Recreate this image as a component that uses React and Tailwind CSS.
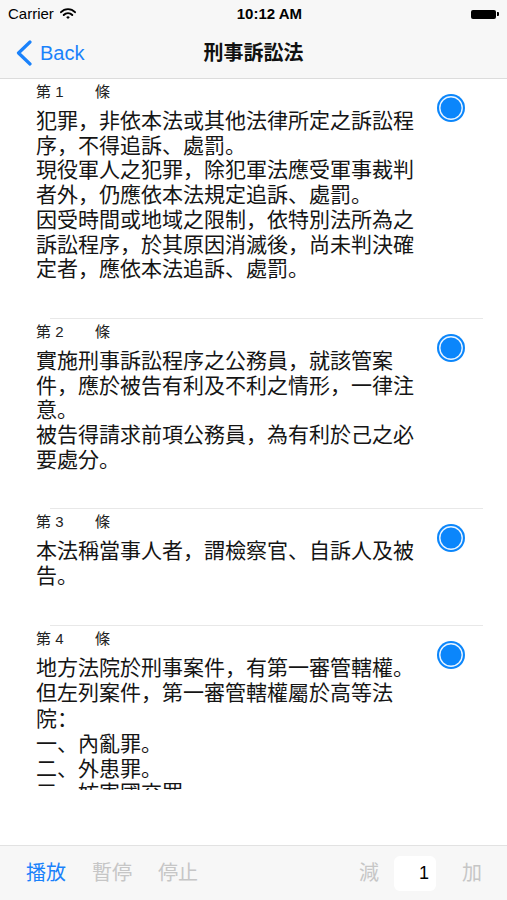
import React from "react";

const FONT = { fontFamily: '"Liberation Sans", "Noto Sans CJK JP", sans-serif' };
const SC = { fontFamily: '"Noto Sans CJK SC", sans-serif' };

const rows = [
  {
    n: "1",
    text:
      "犯罪，非依本法或其他法律所定之訴訟程序，不得追訴、處罰。\n現役軍人之犯罪，除犯軍法應受軍事裁判者外，仍應依本法規定追訴、處罰。\n因受時間或地域之限制，依特別法所為之訴訟程序，於其原因消滅後，尚未判決確定者，應依本法追訴、處罰。",
  },
  {
    n: "2",
    text:
      "實施刑事訴訟程序之公務員，就該管案件，應於被告有利及不利之情形，一律注意。\n被告得請求前項公務員，為有利於己之必要處分。",
  },
  { n: "3", text: "本法稱當事人者，謂檢察官、自訴人及被告。" },
  {
    n: "4",
    text:
      "地方法院於刑事案件，有第一審管轄權。\n但左列案件，第一審管轄權屬於高等法院：\n一、內亂罪。\n二、外患罪。\n三、妨害國交罪。",
  },
];

function Radio() {
  return (
    <svg width="28" height="28" viewBox="0 0 28 28" className="shrink-0">
      <circle cx="14" cy="14" r="14" fill="#0b86fb" />
      <circle cx="14" cy="14" r="11.2" fill="none" stroke="#e9f4ff" strokeWidth="1.4" />
    </svg>
  );
}

function Body({ text }) {
  const parts = text.split("：");
  return (
    <>
      {parts.map((p, i) => (
        <React.Fragment key={i}>
          {i > 0 && <span style={SC}>：</span>}
          {p}
        </React.Fragment>
      ))}
    </>
  );
}

function Row({ n, text, first }) {
  return (
    <>
      {!first && <div className="h-px bg-[#e8e8e8] ml-[50px] mr-[24px]" />}
      <div className="flex pl-[36px] pt-[3px] pb-[36px]">
        <div className="w-[390px]">
          <div className="text-[15px] leading-[20px] text-[#222]">
            <span className="inline-block w-[59px]">第 {n}</span>
            <span>條</span>
          </div>
          <div className="mt-[7px] text-[21px] leading-[24.7px] text-[#151515] whitespace-pre-wrap">
            <Body text={text} />
          </div>
        </div>
        <div className="ml-[11px] mt-[12px]">
          <Radio />
        </div>
      </div>
    </>
  );
}

export default function App() {
  return (
    <div className="w-[507px] h-[900px] bg-white flex flex-col overflow-hidden" style={FONT}>
      {/* status + nav */}
      <div className="bg-[#f7f7f7] border-b border-[#dcdcdc]">
        <div className="h-[28px] flex items-center px-[8px] relative text-[15px] text-black">
          <span>Carrier</span>
          <svg width="16" height="11" viewBox="0 0 16 11" className="ml-[6px] mb-[2px]">
            <path d="M1 4.2 A 9.5 9.5 0 0 1 15 4.2" fill="none" stroke="black" strokeWidth="1.9" strokeLinecap="round" />
            <path d="M3.7 7 A 5.8 5.8 0 0 1 12.3 7" fill="none" stroke="black" strokeWidth="1.9" strokeLinecap="round" />
            <path d="M6.2 9.2 A 2.4 2.4 0 0 1 9.8 9.2 L8 11 Z" fill="black" />
          </svg>
          <div className="flex-1 flex justify-center">
            <span className="font-semibold text-[15px] mr-[8px]">10:12 AM</span>
          </div>
          <div className="flex items-center">
            <div className="w-[25px] h-[9px] bg-black rounded-[2px]" />
            <div className="w-[2px] h-[4px] bg-black rounded-r-[1px] ml-[1px]" />
          </div>
        </div>
        <div className="h-[50px] flex items-center relative">
          <div className="flex items-center pl-[15px] text-[#1a82fb] text-[20px]">
            <svg width="18" height="26" viewBox="0 0 18 26">
              <polyline points="15,2 3.5,13 15,24" fill="none" stroke="#1a82fb" strokeWidth="3.2" strokeLinecap="round" strokeLinejoin="round" />
            </svg>
            <span className="ml-[7px]">Back</span>
          </div>
          <div className="absolute left-0 right-0 top-0 bottom-0 flex items-center justify-center pointer-events-none">
            <span className="text-[20px] font-semibold text-[#111]">刑事訴訟法</span>
          </div>
        </div>
      </div>

      {/* content */}
      <div className="h-[711px] overflow-hidden">
        {rows.map((r, i) => (
          <Row key={r.n} n={r.n} text={r.text} first={i === 0} />
        ))}
      </div>
      <div className="h-[55px]" />

      {/* toolbar */}
      <div className="h-[55px] border-t border-[#e2e2e2] bg-[#f7f7f7] flex items-center text-[20px]">
        <span className="ml-[26px] text-[#1a82fb]">播放</span>
        <span className="ml-[26px] text-[#c6c6c6]">暫停</span>
        <span className="ml-[26px] text-[#c6c6c6]">停止</span>
        <div className="flex-1" />
        <span className="text-[#c6c6c6]">減</span>
        <div className="ml-[15px] w-[42px] h-[35px] bg-white rounded-[6px] flex items-center justify-end pr-[7px] text-[18px] text-black">
          1
        </div>
        <span className="ml-[26px] mr-[25px] text-[#c6c6c6]">加</span>
      </div>
    </div>
  );
}
